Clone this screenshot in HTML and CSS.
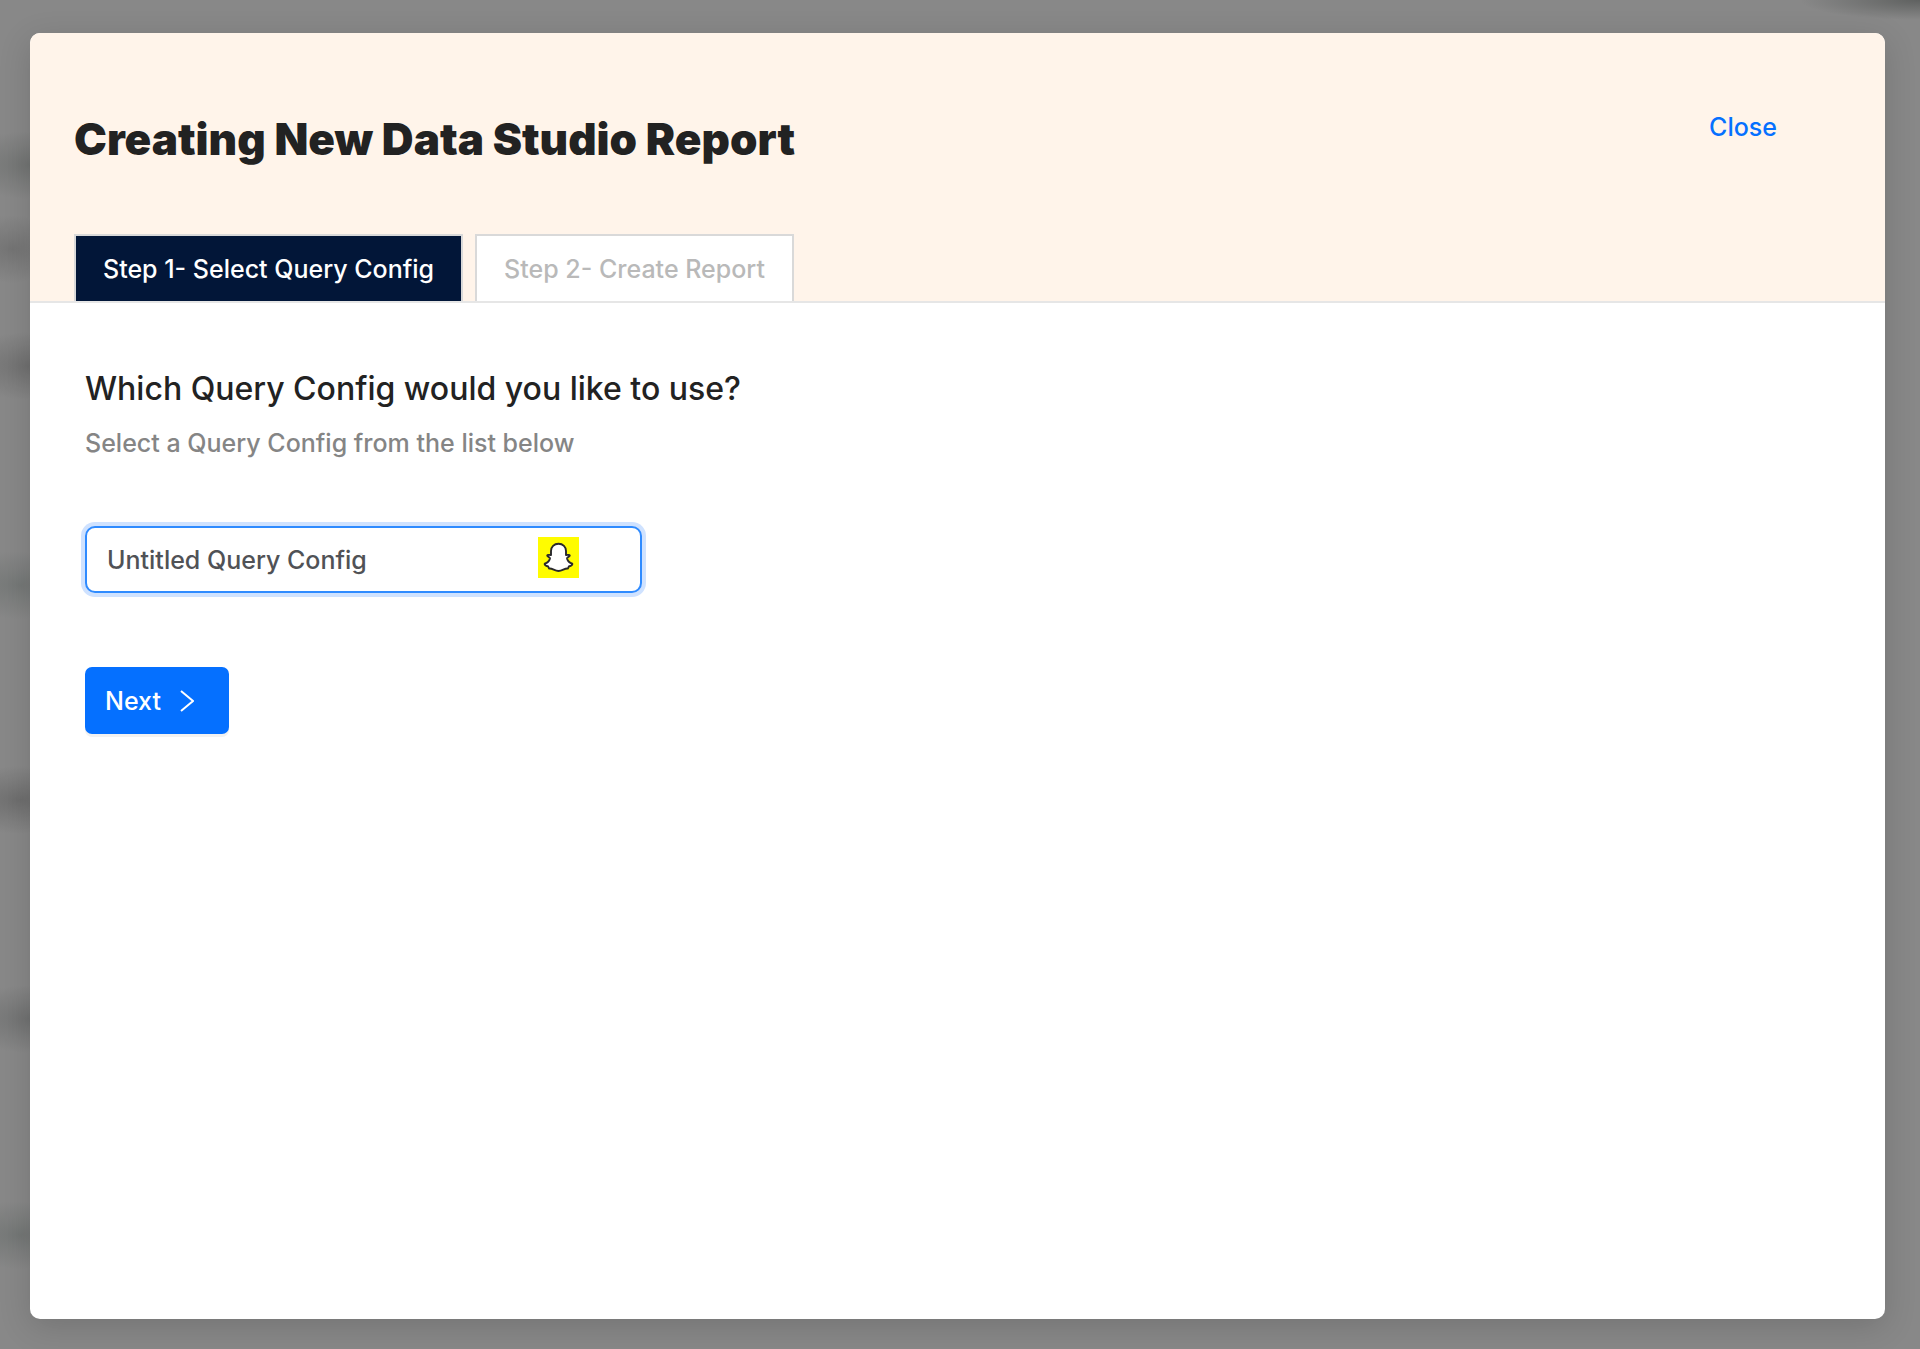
FILE: index.html
```html
<!DOCTYPE html>
<html lang="en">
<head>
<meta charset="utf-8">
<title>Creating New Data Studio Report</title>
<link rel="stylesheet" href="styles.css">
</head>
<body>
<div class="backdrop">
  <main class="modal" role="dialog" aria-labelledby="modal-title">
    <header class="modal-header">
      <div class="title-row">
        <h1 class="title" id="modal-title">Creating New Data Studio Report</h1>
        <a class="close" href="#">Close</a>
      </div>
      <nav class="tabs">
        <button class="tab tab-active" type="button">Step 1- Select Query Config</button>
        <button class="tab" type="button" disabled>Step 2- Create Report</button>
      </nav>
    </header>
    <form class="modal-body">
      <label class="question" for="query-config">Which Query Config would you like to use?</label>
      <p class="hint">Select a Query Config from the list below</p>
      <div class="select-wrap">
        <select class="select" id="query-config">
          <option>Untitled Query Config</option>
        </select>
        <svg class="snap" viewBox="0 0 41 41" aria-hidden="true">
          <rect width="41" height="41" fill="#fffc00"/>
          <path d="M20.500 6.800C16 6.800 13 10 13 14V18C11.500 18.200 9.500 17.300 9.200 18.400C9 19.700 12.200 20 12 21.500C11.300 24 9 26 6.700 26.700C6.300 28.300 8.500 29 10.200 29.500L11 31.500C14.500 31 16.500 34 20.500 34S26.500 31 30 31.500L30.800 29.500C32.500 29 34.700 28.300 34.300 26.700C32 26 29.700 24 29 21.500C28.800 20 32 19.700 31.800 18.400C31.500 17.300 29.500 18.200 28 18V14C28 10 25 6.800 20.500 6.800Z" fill="#fff" stroke="#28282c" stroke-width="1.900" stroke-linejoin="round"/>
        </svg>
      </div>
      <button class="next" type="button">
        <span>Next</span>
        <svg class="chevron" viewBox="0 0 14 22" aria-hidden="true"><path d="M1 1L13 11L1 21" fill="none" stroke="#fff" stroke-width="2"/></svg>
      </button>
    </form>
  </main>
</div>
</body>
</html>
```
FILE: styles.css
```css
* { box-sizing: border-box; }

body {
  margin: 0;
  font-family: Inter, Lato, "Liberation Sans", sans-serif;
  font-size: 25px;
  font-weight: 500;
  line-height: 32px;
  color: #222;
}

/* Dimmed page showing through behind the dialog */
.backdrop {
  display: flex;
  min-height: 100vh;
  padding: 33px 35px 30px 30px;
  background:
    radial-gradient(120px 20px at 100% 0, #5f6160, transparent),
    radial-gradient(70px 34px at 30px 165px, #727473, transparent),
    radial-gradient(50px 34px at 12px 249px, #747474, transparent),
    radial-gradient(70px 34px at 30px 366px, #707070, transparent),
    radial-gradient(70px 34px at 20px 585px, #757877, transparent),
    radial-gradient(70px 34px at 20px 800px, #6e6e6e, transparent),
    radial-gradient(70px 34px at 30px 1019px, #717272, transparent),
    radial-gradient(70px 34px at 20px 1235px, #747776, transparent),
    #888;
}

.modal {
  flex: 1;
  background: #fff;
  border-radius: 10px;
  box-shadow: 0 8px 32px rgba(0, 0, 0, 0.15);
  overflow: hidden;
}

.modal-header {
  padding: 78px 44px 0;
  background: #fff4ea;
  border-bottom: 2px solid #e6e6e6;
}

.title-row {
  display: flex;
  justify-content: space-between;
  align-items: flex-start;
  padding-right: 64px;
}

.title {
  margin: 0;
  font-size: 44px;
  font-weight: 900;
  line-height: 56px;
}

.close { color: #0570ff; text-decoration: none; }

.tabs {
  display: flex;
  gap: 12px;
  margin-top: 67px;
}

.tab {
  height: 67px;
  padding: 0 27px;
  border: 2px solid #d9d9d9;
  border-bottom: 0;
  background: #fff;
  color: #b9b9b9;
  font: inherit;
}

.tab-active { background: #021638; color: #fff; }

.modal-body {
  display: flex;
  flex-direction: column;
  align-items: flex-start;
  padding: 66px 55px;
}

.question { font-size: 32px; line-height: 40px; }

.hint { margin: 18px 0 0; color: #858585; }

.select-wrap {
  position: relative;
  width: 557px;
  max-width: 100%;
  margin-top: 67px;
}

.select {
  display: block;
  width: 100%;
  height: 67px;
  padding: 0 20px;
  border: 2px solid #2f8bff;
  border-radius: 10px;
  box-shadow: 0 0 0 4px #cfe2ff;
  background: #fff;
  color: #505256;
  font: inherit;
  appearance: none;
}

.snap {
  position: absolute;
  top: 11px;
  right: 63px;
  width: 41px;
  height: 41px;
  pointer-events: none;
}

.next {
  display: flex;
  align-items: center;
  gap: 19px;
  height: 67px;
  margin-top: 74px;
  padding: 0 35px 0 20px;
  border: 0;
  border-radius: 7px;
  box-shadow: 0 3px 0 #f2f2f2;
  background: #0570ff;
  color: #fff;
  font: inherit;
}

.chevron { width: 14px; height: 22px; }
```
